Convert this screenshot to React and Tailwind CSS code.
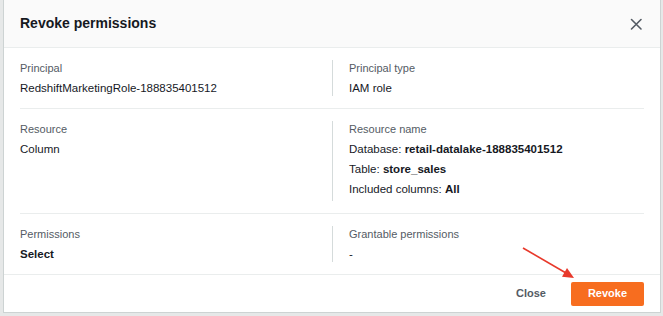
import React from 'react';

const font = { fontFamily: '"Liberation Sans", Arial, sans-serif' };

function Field({ label, children, bordered }) {
  return (
    <div className={bordered ? 'border-l border-[#d5dbdb] pl-4' : ''}>
      <div className="text-[11px] leading-4 text-[#545b64]">{label}</div>
      {children}
    </div>
  );
}

function Value({ children }) {
  return <div className="mt-1 text-[11.5px] leading-4 text-[#16191f]">{children}</div>;
}

export default function App() {
  return (
    <div className="relative w-[663px] h-[316px] overflow-hidden bg-[#e6e8e8]" style={font}>
      <div className="ml-[3px] w-[658px] h-[313px] flex flex-col bg-white border border-t-0 border-[#cdd3d3]">
        {/* header */}
        <div className="h-[48px] flex items-center justify-between px-4 bg-[#fafafa] border-b border-[#eaeded]">
          <h2 className="text-[14px] font-bold text-[#16191f]">Revoke permissions</h2>
          <button className="w-4 h-4 text-[#545b64]">
            <svg viewBox="0 0 16 16" width="16" height="16" fill="none" stroke="currentColor" strokeWidth="1.6" strokeLinecap="round">
              <path d="M3.5 3.5l9.5 9.5M13 3.5l-9.5 9.5" />
            </svg>
          </button>
        </div>

        {/* body */}
        <div className="px-4 flex-1">
          <div className="grid grid-cols-2 py-3 border-b border-[#eaeded]">
            <Field label="Principal">
              <Value>RedshiftMarketingRole-188835401512</Value>
            </Field>
            <Field label="Principal type" bordered>
              <Value>IAM role</Value>
            </Field>
          </div>

          <div className="grid grid-cols-2 py-3 border-b border-[#eaeded]">
            <Field label="Resource">
              <Value>Column</Value>
            </Field>
            <Field label="Resource name" bordered>
              <div className="flex flex-col gap-1 mt-1 pb-1 text-[11.5px] leading-4 text-[#16191f]">
                <div>Database: <b>retail-datalake-188835401512</b></div>
                <div>Table: <b>store_sales</b></div>
                <div>Included columns: <b>All</b></div>
              </div>
            </Field>
          </div>

          <div className="grid grid-cols-2 py-3">
            <Field label="Permissions">
              <Value><b>Select</b></Value>
            </Field>
            <Field label="Grantable permissions" bordered>
              <Value>-</Value>
            </Field>
          </div>
        </div>

        {/* footer */}
        <div className="h-[38px] flex items-center justify-end gap-[25px] px-4 border-t border-[#eaeded]">
          <button className="text-[11px] font-bold text-[#545b64]">Close</button>
          <button className="w-[73px] h-[24px] rounded-[2px] bg-[#f76d1f] text-[11px] font-bold text-white">Revoke</button>
        </div>
      </div>

      {/* annotation arrow */}
      <svg className="absolute left-0 top-0 pointer-events-none" width="663" height="316">
        <line x1="523" y1="248" x2="566" y2="273" stroke="#e8392b" strokeWidth="1.6" />
        <polygon points="574,278 562,276.7 567,268.1" fill="#e8392b" />
      </svg>
    </div>
  );
}
